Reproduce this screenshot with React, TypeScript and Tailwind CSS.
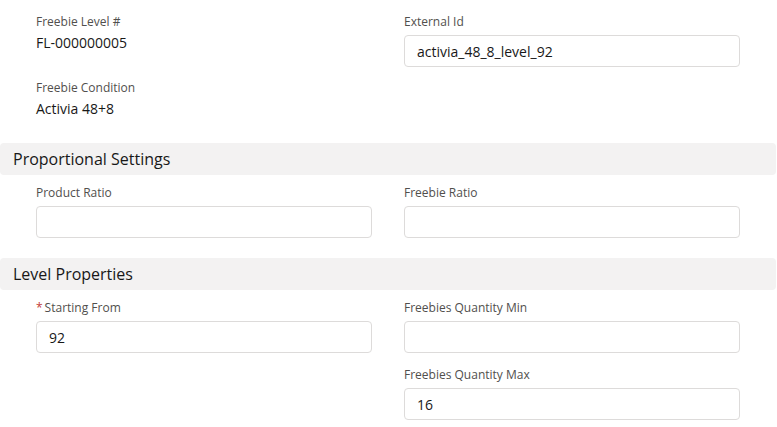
import React from 'react';

const labelCls = 'block text-xs leading-[18px] text-[#514f4d]';
const inputCls =
  'w-full h-8 rounded border border-[#dddbda] bg-white px-3 text-sm text-[#181818] outline-none';

function StaticField({ label, value }: { label: string; value: string }) {
  return (
    <div>
      <span className={labelCls}>{label}</span>
      <div className="mt-[2px] text-sm leading-5 text-[#181818]">{value}</div>
    </div>
  );
}

function InputField({
  label,
  value = '',
  required = false
}: {
  label: string;
  value?: string;
  required?: boolean;
}) {
  return (
    <div>
      <label className={labelCls}>
        {required && <abbr className="mr-[2px] text-[#c23934] no-underline">*</abbr>}
        {label}
      </label>
      <input type="text" className={`${inputCls} mt-1`} defaultValue={value} />
    </div>
  );
}

function SectionHeader({ title }: { title: string }) {
  return (
    <div className="mr-px flex h-8 items-center rounded bg-[#f3f2f2] px-[13px] text-base text-[#181818]">
      {title}
    </div>
  );
}

export default function App() {
  return (
    <div className="min-h-[427px] w-[777px] bg-white pt-[13px]" style={{ fontFamily: '"Open Sans", "Liberation Sans", sans-serif' }}>
      <div className="grid grid-cols-2 gap-x-8 gap-y-3 pl-9 pr-[37px]">
        <StaticField label="Freebie Level #" value="FL-000000005" />
        <InputField label="External Id" value="activia_48_8_level_92" />
        <StaticField label="Freebie Condition" value="Activia 48+8" />
        <div />
      </div>

      <div className="mt-6">
        <SectionHeader title="Proportional Settings" />
        <div className="grid grid-cols-2 gap-x-8 pl-9 pr-[37px] pt-[9px]">
          <InputField label="Product Ratio" />
          <InputField label="Freebie Ratio" />
        </div>
      </div>

      <div className="mt-5">
        <SectionHeader title="Level Properties" />
        <div className="grid grid-cols-2 gap-x-8 gap-y-[13px] pl-9 pr-[37px] pt-[9px]">
          <InputField label="Starting From" value="92" required />
          <InputField label="Freebies Quantity Min" />
          <div />
          <InputField label="Freebies Quantity Max" value="16" />
        </div>
      </div>
    </div>
  );
}
